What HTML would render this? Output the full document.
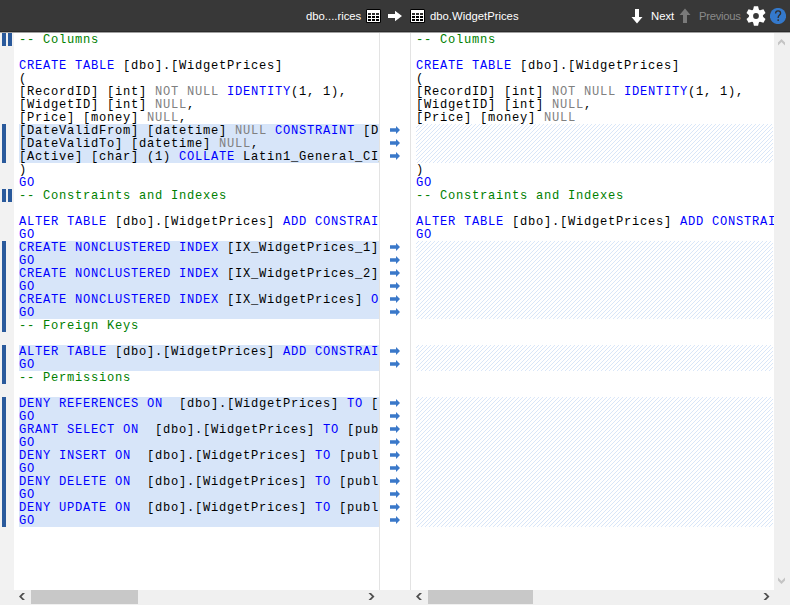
<!DOCTYPE html>
<html><head><meta charset="utf-8"><style>
*{box-sizing:border-box}
html,body{margin:0;padding:0}
body{width:790px;height:605px;overflow:hidden;position:relative;background:#fff;font-family:"Liberation Sans",sans-serif}
.abs{position:absolute}
#hdr{position:absolute;left:0;top:0;width:790px;height:32px;background:#383838}
.code{position:absolute;top:33px;height:557px;overflow:hidden;font-family:"Liberation Mono",monospace;font-size:12.1px;letter-spacing:0.74px;line-height:13px;color:#000}
.ln{position:absolute;height:13px;white-space:pre}
.k{color:#0000ff}.c{color:#008000}.g{color:#808080}
.hl{position:absolute;background:#d7e5f9}
.hatch{position:absolute;background-color:#fff;background-image:repeating-linear-gradient(-45deg,#d9e5f5 0,#d9e5f5 1.5px,#fff 1.5px,#fff 5.66px)}
.bar{position:absolute;width:4px;background:#2a5a9c}
.htxt{position:absolute;top:0;height:32px;line-height:32px;font-size:11.3px;color:#fff;white-space:nowrap}
</style></head><body>

<div id="hdr">
<div class="htxt" style="left:306px">dbo....rices</div>
<svg class="abs" style="left:366px;top:9px" width="15" height="14" viewBox="0 0 15 14"><rect x="0" y="0" width="15" height="14" rx="1.5" fill="#000"/><rect x="1" y="1" width="13" height="12" fill="#fff"/><rect x="2" y="4" width="3" height="2" fill="#2e2e2e"/><rect x="2" y="7" width="3" height="2" fill="#000"/><rect x="2" y="10" width="3" height="2" fill="#000"/><rect x="6" y="4" width="3" height="2" fill="#2e2e2e"/><rect x="6" y="7" width="3" height="2" fill="#000"/><rect x="6" y="10" width="3" height="2" fill="#000"/><rect x="10" y="4" width="3" height="2" fill="#2e2e2e"/><rect x="10" y="7" width="3" height="2" fill="#000"/><rect x="10" y="10" width="3" height="2" fill="#000"/></svg>
<svg class="abs" style="left:387px;top:10px" width="16" height="12" viewBox="0 0 16 12"><path d="M1 4H8V0.8L15 6L8 11.2V8H1Z" fill="#fff"/></svg>
<svg class="abs" style="left:410px;top:9px" width="15" height="14" viewBox="0 0 15 14"><rect x="0" y="0" width="15" height="14" rx="1.5" fill="#000"/><rect x="1" y="1" width="13" height="12" fill="#fff"/><rect x="2" y="4" width="3" height="2" fill="#2e2e2e"/><rect x="2" y="7" width="3" height="2" fill="#000"/><rect x="2" y="10" width="3" height="2" fill="#000"/><rect x="6" y="4" width="3" height="2" fill="#2e2e2e"/><rect x="6" y="7" width="3" height="2" fill="#000"/><rect x="6" y="10" width="3" height="2" fill="#000"/><rect x="10" y="4" width="3" height="2" fill="#2e2e2e"/><rect x="10" y="7" width="3" height="2" fill="#000"/><rect x="10" y="10" width="3" height="2" fill="#000"/></svg>
<div class="htxt" style="left:430px">dbo.WidgetPrices</div>
<svg class="abs" style="left:631px;top:8px" width="12" height="16" viewBox="0 0 12 16"><path d="M4 1H8V9H11.5L6 15.5L0.5 9H4Z" fill="#fff"/></svg>
<div class="htxt" style="left:651px">Next</div>
<svg class="abs" style="left:679px;top:8px" width="12" height="16" viewBox="0 0 12 16"><path d="M4 15H8V7H11.5L6 0.5L0.5 7H4Z" fill="#7a7a7a"/></svg>
<div class="htxt" style="left:699px;color:#8a8a8a;letter-spacing:-0.3px">Previous</div>
<svg class="abs" style="left:746px;top:6px" width="20" height="20" viewBox="0 0 20 20"><path d="M7.28 2.90 L7.92 0.22 L12.08 0.22 L12.72 2.90 Q13.10 4.63 14.78 4.09 L17.43 3.31 L19.51 6.91 L17.51 8.81 Q16.20 10.00 17.51 11.19 L19.51 13.09 L17.43 16.69 L14.78 15.91 Q13.10 15.37 12.72 17.10 L12.08 19.78 L7.92 19.78 L7.28 17.10 Q6.90 15.37 5.22 15.91 L2.57 16.69 L0.49 13.09 L2.49 11.19 Q3.80 10.00 2.49 8.81 L0.49 6.91 L2.57 3.31 L5.22 4.09 Q6.90 4.63 7.28 2.90Z" fill="#fff"/><circle cx="10" cy="10" r="2.9" fill="#383838"/></svg>
<svg class="abs" style="left:770px;top:8px" width="16" height="16" viewBox="0 0 16 16"><circle cx="8" cy="8" r="8.1" fill="#3479cc"/><path d="M5.6 5.6C5.6 3.9 6.6 2.9 8.1 2.9C9.6 2.9 10.6 3.9 10.6 5.2C10.6 6.9 8.2 7.3 8.2 9.3V10" stroke="#303030" stroke-width="1.35" fill="none"/><circle cx="8.2" cy="12.1" r="0.95" fill="#303030"/></svg>
</div>
<div class="abs" style="left:0;top:31px;width:790px;height:1px;background:#2a2a2a"></div>
<div class="abs" style="left:0;top:32px;width:790px;height:1px;background:#a0a0a0"></div>
<div class="abs" style="left:0;top:33px;width:14px;height:557px;background:#f2f2f2"></div>
<div class="bar" style="left:2px;top:124px;height:39px"></div>
<div class="bar" style="left:2px;top:241px;height:91px"></div>
<div class="bar" style="left:2px;top:345px;height:39px"></div>
<div class="bar" style="left:2px;top:397px;height:130px"></div>
<div class="bar" style="left:2px;top:33px;height:13px"></div>
<div class="bar" style="left:8px;top:33px;height:13px"></div>
<div class="bar" style="left:2px;top:189px;height:13px"></div>
<div class="bar" style="left:8px;top:189px;height:13px"></div>
<div class="code" style="left:14px;width:365px">
<div class="hl" style="left:5px;top:91px;width:360px;height:39px"></div>
<div class="hl" style="left:5px;top:208px;width:360px;height:78px"></div>
<div class="hl" style="left:5px;top:312px;width:360px;height:26px"></div>
<div class="hl" style="left:5px;top:364px;width:360px;height:130px"></div>
<div class="ln" style="left:5px;top:1px"><span class="c">-- Columns</span></div>
<div class="ln" style="left:5px;top:27px"><span class="k">CREATE TABLE</span> [dbo].[WidgetPrices]</div>
<div class="ln" style="left:5px;top:40px">(</div>
<div class="ln" style="left:5px;top:53px">[RecordID] [int] <span class="g">NOT NULL</span> <span class="k">IDENTITY</span>(1, 1),</div>
<div class="ln" style="left:5px;top:66px">[WidgetID] [int] <span class="g">NULL</span>,</div>
<div class="ln" style="left:5px;top:79px">[Price] [money] <span class="g">NULL</span>,</div>
<div class="ln" style="left:5px;top:92px">[DateValidFrom] [datetime] <span class="g">NULL</span> <span class="k">CONSTRAINT</span> [DF_WidgetPrices_DateValidFrom]</div>
<div class="ln" style="left:5px;top:105px">[DateValidTo] [datetime] <span class="g">NULL</span>,</div>
<div class="ln" style="left:5px;top:118px">[Active] [char] (1) <span class="k">COLLATE</span> Latin1_General_CI_AS NULL</div>
<div class="ln" style="left:5px;top:131px">)</div>
<div class="ln" style="left:5px;top:144px"><span class="k">GO</span></div>
<div class="ln" style="left:5px;top:157px"><span class="c">-- Constraints and Indexes</span></div>
<div class="ln" style="left:5px;top:183px"><span class="k">ALTER TABLE</span> [dbo].[WidgetPrices] <span class="k">ADD CONSTRAINT</span> [PK_WidgetPrices]</div>
<div class="ln" style="left:5px;top:196px"><span class="k">GO</span></div>
<div class="ln" style="left:5px;top:209px"><span class="k">CREATE NONCLUSTERED INDEX</span> [IX_WidgetPrices_1] <span class="k">ON</span> [dbo]</div>
<div class="ln" style="left:5px;top:222px"><span class="k">GO</span></div>
<div class="ln" style="left:5px;top:235px"><span class="k">CREATE NONCLUSTERED INDEX</span> [IX_WidgetPrices_2] <span class="k">ON</span> [dbo]</div>
<div class="ln" style="left:5px;top:248px"><span class="k">GO</span></div>
<div class="ln" style="left:5px;top:261px"><span class="k">CREATE NONCLUSTERED INDEX</span> [IX_WidgetPrices] <span class="k">ON</span> [dbo]</div>
<div class="ln" style="left:5px;top:274px"><span class="k">GO</span></div>
<div class="ln" style="left:5px;top:287px"><span class="c">-- Foreign Keys</span></div>
<div class="ln" style="left:5px;top:313px"><span class="k">ALTER TABLE</span> [dbo].[WidgetPrices] <span class="k">ADD CONSTRAINT</span> [FK_WidgetPrices]</div>
<div class="ln" style="left:5px;top:326px"><span class="k">GO</span></div>
<div class="ln" style="left:5px;top:339px"><span class="c">-- Permissions</span></div>
<div class="ln" style="left:5px;top:365px"><span class="k">DENY REFERENCES ON</span>  [dbo].[WidgetPrices] <span class="k">TO</span> [public]</div>
<div class="ln" style="left:5px;top:378px"><span class="k">GO</span></div>
<div class="ln" style="left:5px;top:391px"><span class="k">GRANT SELECT ON</span>  [dbo].[WidgetPrices] <span class="k">TO</span> [public]</div>
<div class="ln" style="left:5px;top:404px"><span class="k">GO</span></div>
<div class="ln" style="left:5px;top:417px"><span class="k">DENY INSERT ON</span>  [dbo].[WidgetPrices] <span class="k">TO</span> [public]</div>
<div class="ln" style="left:5px;top:430px"><span class="k">GO</span></div>
<div class="ln" style="left:5px;top:443px"><span class="k">DENY DELETE ON</span>  [dbo].[WidgetPrices] <span class="k">TO</span> [public]</div>
<div class="ln" style="left:5px;top:456px"><span class="k">GO</span></div>
<div class="ln" style="left:5px;top:469px"><span class="k">DENY UPDATE ON</span>  [dbo].[WidgetPrices] <span class="k">TO</span> [public]</div>
<div class="ln" style="left:5px;top:482px"><span class="k">GO</span></div>
</div>
<div class="abs" style="left:379px;top:33px;width:1px;height:557px;background:#e3e3e3"></div>
<div class="abs" style="left:410px;top:33px;width:1px;height:557px;background:#e3e3e3"></div>
<svg class="abs" style="left:390px;top:126px" width="10" height="8" viewBox="0 0 10 8"><path d="M0 2.2H6V0L10 4L6 8V5.8H0Z" fill="#3a78c9"/></svg>
<svg class="abs" style="left:390px;top:139px" width="10" height="8" viewBox="0 0 10 8"><path d="M0 2.2H6V0L10 4L6 8V5.8H0Z" fill="#3a78c9"/></svg>
<svg class="abs" style="left:390px;top:152px" width="10" height="8" viewBox="0 0 10 8"><path d="M0 2.2H6V0L10 4L6 8V5.8H0Z" fill="#3a78c9"/></svg>
<svg class="abs" style="left:390px;top:243px" width="10" height="8" viewBox="0 0 10 8"><path d="M0 2.2H6V0L10 4L6 8V5.8H0Z" fill="#3a78c9"/></svg>
<svg class="abs" style="left:390px;top:256px" width="10" height="8" viewBox="0 0 10 8"><path d="M0 2.2H6V0L10 4L6 8V5.8H0Z" fill="#3a78c9"/></svg>
<svg class="abs" style="left:390px;top:269px" width="10" height="8" viewBox="0 0 10 8"><path d="M0 2.2H6V0L10 4L6 8V5.8H0Z" fill="#3a78c9"/></svg>
<svg class="abs" style="left:390px;top:282px" width="10" height="8" viewBox="0 0 10 8"><path d="M0 2.2H6V0L10 4L6 8V5.8H0Z" fill="#3a78c9"/></svg>
<svg class="abs" style="left:390px;top:295px" width="10" height="8" viewBox="0 0 10 8"><path d="M0 2.2H6V0L10 4L6 8V5.8H0Z" fill="#3a78c9"/></svg>
<svg class="abs" style="left:390px;top:308px" width="10" height="8" viewBox="0 0 10 8"><path d="M0 2.2H6V0L10 4L6 8V5.8H0Z" fill="#3a78c9"/></svg>
<svg class="abs" style="left:390px;top:347px" width="10" height="8" viewBox="0 0 10 8"><path d="M0 2.2H6V0L10 4L6 8V5.8H0Z" fill="#3a78c9"/></svg>
<svg class="abs" style="left:390px;top:360px" width="10" height="8" viewBox="0 0 10 8"><path d="M0 2.2H6V0L10 4L6 8V5.8H0Z" fill="#3a78c9"/></svg>
<svg class="abs" style="left:390px;top:399px" width="10" height="8" viewBox="0 0 10 8"><path d="M0 2.2H6V0L10 4L6 8V5.8H0Z" fill="#3a78c9"/></svg>
<svg class="abs" style="left:390px;top:412px" width="10" height="8" viewBox="0 0 10 8"><path d="M0 2.2H6V0L10 4L6 8V5.8H0Z" fill="#3a78c9"/></svg>
<svg class="abs" style="left:390px;top:425px" width="10" height="8" viewBox="0 0 10 8"><path d="M0 2.2H6V0L10 4L6 8V5.8H0Z" fill="#3a78c9"/></svg>
<svg class="abs" style="left:390px;top:438px" width="10" height="8" viewBox="0 0 10 8"><path d="M0 2.2H6V0L10 4L6 8V5.8H0Z" fill="#3a78c9"/></svg>
<svg class="abs" style="left:390px;top:451px" width="10" height="8" viewBox="0 0 10 8"><path d="M0 2.2H6V0L10 4L6 8V5.8H0Z" fill="#3a78c9"/></svg>
<svg class="abs" style="left:390px;top:464px" width="10" height="8" viewBox="0 0 10 8"><path d="M0 2.2H6V0L10 4L6 8V5.8H0Z" fill="#3a78c9"/></svg>
<svg class="abs" style="left:390px;top:477px" width="10" height="8" viewBox="0 0 10 8"><path d="M0 2.2H6V0L10 4L6 8V5.8H0Z" fill="#3a78c9"/></svg>
<svg class="abs" style="left:390px;top:490px" width="10" height="8" viewBox="0 0 10 8"><path d="M0 2.2H6V0L10 4L6 8V5.8H0Z" fill="#3a78c9"/></svg>
<svg class="abs" style="left:390px;top:503px" width="10" height="8" viewBox="0 0 10 8"><path d="M0 2.2H6V0L10 4L6 8V5.8H0Z" fill="#3a78c9"/></svg>
<svg class="abs" style="left:390px;top:516px" width="10" height="8" viewBox="0 0 10 8"><path d="M0 2.2H6V0L10 4L6 8V5.8H0Z" fill="#3a78c9"/></svg>
<div class="code" style="left:411px;width:363px">
<svg class="abs" style="left:5px;top:0" width="358" height="556" shape-rendering="crispEdges"><defs><pattern id="hp" x="0" y="0" width="4" height="4" patternUnits="userSpaceOnUse"><rect x="2" y="0" width="1" height="1" fill="#d9e6f8"/><rect x="1" y="1" width="1" height="1" fill="#d9e6f8"/><rect x="0" y="2" width="1" height="1" fill="#d9e6f8"/><rect x="3" y="3" width="1" height="1" fill="#d9e6f8"/></pattern></defs><rect x="0" y="91" width="357" height="39" fill="url(#hp)"/><rect x="0" y="208" width="357" height="78" fill="url(#hp)"/><rect x="0" y="312" width="357" height="26" fill="url(#hp)"/><rect x="0" y="364" width="357" height="130" fill="url(#hp)"/></svg>
<div class="ln" style="left:5px;top:1px"><span class="c">-- Columns</span></div>
<div class="ln" style="left:5px;top:27px"><span class="k">CREATE TABLE</span> [dbo].[WidgetPrices]</div>
<div class="ln" style="left:5px;top:40px">(</div>
<div class="ln" style="left:5px;top:53px">[RecordID] [int] <span class="g">NOT NULL</span> <span class="k">IDENTITY</span>(1, 1),</div>
<div class="ln" style="left:5px;top:66px">[WidgetID] [int] <span class="g">NULL</span>,</div>
<div class="ln" style="left:5px;top:79px">[Price] [money] <span class="g">NULL</span></div>
<div class="ln" style="left:5px;top:131px">)</div>
<div class="ln" style="left:5px;top:144px"><span class="k">GO</span></div>
<div class="ln" style="left:5px;top:157px"><span class="c">-- Constraints and Indexes</span></div>
<div class="ln" style="left:5px;top:183px"><span class="k">ALTER TABLE</span> [dbo].[WidgetPrices] <span class="k">ADD CONSTRAINT</span> [PK_WidgetPrices]</div>
<div class="ln" style="left:5px;top:196px"><span class="k">GO</span></div>
</div>
<div class="abs" style="left:774px;top:33px;width:16px;height:572px;background:#f0f0f0"></div>
<svg class="abs" style="left:0;top:0" width="790" height="605"><path d="M778 42.4L781.5 38.9L785 42.4L785 45.4L781.5 41.9L778 45.4Z" fill="#c4c4c4"/><path d="M778 577.6L781.5 581.1L785 577.6L785 580.6L781.5 584.1L778 580.6Z" fill="#c4c4c4"/></svg>
<div class="abs" style="left:0;top:590px;width:790px;height:15px;background:#f0f0f0"></div>
<div class="abs" style="left:31px;top:590px;width:107px;height:14px;background:#c8c8c8"></div>
<div class="abs" style="left:428px;top:590px;width:105px;height:14px;background:#c8c8c8"></div>
<svg class="abs" style="left:0;top:0" width="790" height="605"><path d="M22.5 593L25.0 593L21.5 596.5L25.0 600L22.5 600L19.0 596.5Z M371.0 593L368.5 593L372.0 596.5L368.5 600L371.0 600L374.5 596.5Z M419.5 593L422.0 593L418.5 596.5L422.0 600L419.5 600L416.0 596.5Z M766.0 593L763.5 593L767.0 596.5L763.5 600L766.0 600L769.5 596.5Z" fill="#4f4f4f"/></svg>
</body></html>
